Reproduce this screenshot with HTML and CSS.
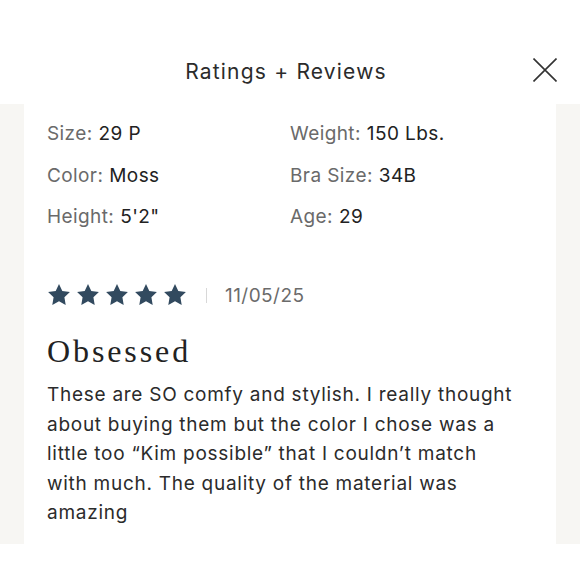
FILE: index.html
```html
<!DOCTYPE html>
<html lang="en">
<head>
<meta charset="utf-8">
<title>Ratings + Reviews</title>
<link rel="stylesheet" href="styles.css">
</head>
<body>
<header class="header">
  <h1 class="title">Ratings + Reviews</h1>
  <button class="close" aria-label="Close">
    <svg width="24" height="24" viewBox="0 0 24 24"><path d="M0.5 0.5L23.5 23.5M23.5 0.5L0.5 23.5" stroke="#333" stroke-width="1.6" fill="none"/></svg>
  </button>
</header>
<main class="panel">
  <section class="card">
    <dl class="attrs">
      <div class="attr"><dt>Size:</dt><dd>29 P</dd></div>
      <div class="attr"><dt>Weight:</dt><dd>150 Lbs.</dd></div>
      <div class="attr"><dt>Color:</dt><dd>Moss</dd></div>
      <div class="attr"><dt>Bra Size:</dt><dd>34B</dd></div>
      <div class="attr"><dt>Height:</dt><dd>5'2"</dd></div>
      <div class="attr"><dt>Age:</dt><dd>29</dd></div>
    </dl>
    <div class="meta">
      <div class="stars">
        <svg viewBox="0 0 24 24"><path d="M12 1l3.3 6.9 7.6 1.1-5.5 5.3 1.3 7.6L12 18.3l-6.7 3.6 1.3-7.6L1.1 9l7.6-1.1z"/></svg>
        <svg viewBox="0 0 24 24"><path d="M12 1l3.3 6.9 7.6 1.1-5.5 5.3 1.3 7.6L12 18.3l-6.7 3.6 1.3-7.6L1.1 9l7.6-1.1z"/></svg>
        <svg viewBox="0 0 24 24"><path d="M12 1l3.3 6.9 7.6 1.1-5.5 5.3 1.3 7.6L12 18.3l-6.7 3.6 1.3-7.6L1.1 9l7.6-1.1z"/></svg>
        <svg viewBox="0 0 24 24"><path d="M12 1l3.3 6.9 7.6 1.1-5.5 5.3 1.3 7.6L12 18.3l-6.7 3.6 1.3-7.6L1.1 9l7.6-1.1z"/></svg>
        <svg viewBox="0 0 24 24"><path d="M12 1l3.3 6.9 7.6 1.1-5.5 5.3 1.3 7.6L12 18.3l-6.7 3.6 1.3-7.6L1.1 9l7.6-1.1z"/></svg>
      </div>
      <span class="sep"></span>
      <span class="date">11/05/25</span>
    </div>
    <h2 class="review-title">Obsessed</h2>
    <p class="review-body">These are SO comfy and stylish. I really thought about buying them but the color I chose was a little too “Kim possible” that I couldn’t match with much. The quality of the material was amazing</p>
  </section>
</main>
</body>
</html>
```
FILE: styles.css
```css
html, body {
  margin: 0;
  padding: 0;
  background: #ffffff;
  font-family: Inter, "Liberation Sans", sans-serif;
  color: #2a2a2a;
}

.header {
  height: 104px;
  box-sizing: border-box;
  padding: 38px 8px 0 0;
  display: flex;
  align-items: center;
  justify-content: center;
  position: relative;
  background: #ffffff;
}

.title {
  margin: 0;
  font-size: 21px;
  font-weight: 400;
  color: #2b2b2b;
  letter-spacing: 1.2px;
}

.close {
  position: absolute;
  right: 23px;
  top: 58px;
  width: 24px;
  height: 24px;
  padding: 0;
  border: 0;
  background: none;
  display: block;
}
.close svg { display: block; }

.panel {
  background: #f7f6f3;
  padding: 0 24px;
}

.card {
  background: #ffffff;
  height: 440px;
  box-sizing: border-box;
  padding: 18px 23px 0;
}

.attrs {
  margin: 0;
  display: grid;
  grid-template-columns: 243px 1fr;
  row-gap: 17.5px;
}

.attr {
  display: flex;
  gap: 6px;
  font-size: 19px;
  letter-spacing: 0.4px;
  line-height: 24px;
}

.attr dt { color: #6a6a6a; }
.attr dd { margin: 0; color: #222222; }

.meta {
  display: flex;
  align-items: center;
  margin-top: 54px;
  height: 24px;
}

.stars {
  display: flex;
  gap: 5px;
}
.stars svg {
  width: 24px;
  height: 24px;
  fill: #324a5f;
  display: block;
}

.sep {
  width: 1px;
  height: 15px;
  background: #d8d8d8;
  margin: 0 18px 0 19px;
}

.date {
  font-size: 19px;
  letter-spacing: 0.45px;
  color: #6b6b6b;
}

.review-title {
  margin: 26px 0 0;
  font-family: "Liberation Serif", serif;
  font-weight: 400;
  font-size: 32px;
  letter-spacing: 2.9px;
  line-height: 36px;
  color: #222222;
}

.review-body {
  margin: 11px 0 0;
  max-width: 472px;
  font-size: 19px;
  letter-spacing: 0.73px;
  line-height: 29.5px;
  color: #2b2b2b;
}
```
